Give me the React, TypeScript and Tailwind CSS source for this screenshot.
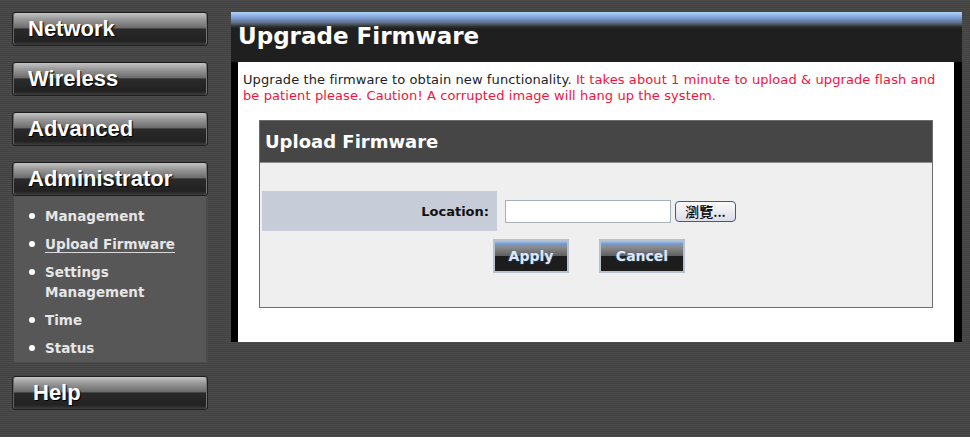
import React from "react";

const navGrad =
  "bg-[linear-gradient(to_bottom,#c4c4c4_0%,#9c9c9c_18%,#6c6c6c_46%,#2a2a2a_50%,#222222_88%,#3e3e3e_100%)]";

function NavBtn({ label, pl }: { label: string; pl: string }) {
  return (
    <div
      className={`h-[34px] w-[196px] rounded-[3px] border border-[#1e1e1e] ${navGrad} shadow-[inset_-1px_0_0_#777,inset_1px_0_0_#666] flex items-center ${pl}`}
    >
      <span className="font-['Liberation_Sans',Arial,sans-serif] font-bold text-[22px] leading-none text-white [text-shadow:1px_1px_1px_#000]">
        {label}
      </span>
    </div>
  );
}

function SubItem({ children, active }: { children: React.ReactNode; active?: boolean }) {
  return (
    <li className="flex items-start">
      <span className="mt-[7px] mr-[10px] ml-[15px] h-[6px] w-[6px] shrink-0 rounded-full bg-white" />
      <span
        className={`font-['DejaVu_Sans',sans-serif] font-bold text-[13.5px] leading-[20px] text-[#e6e6e6] ${
          active ? "underline underline-offset-[3px] decoration-[#d8d8d8]" : ""
        }`}
      >
        {children}
      </span>
    </li>
  );
}

function GlossBtn({ label, w }: { label: string; w: string }) {
  return (
    <div
      className={`${w} h-[34px] border-2 border-[#b8c2ce] bg-[linear-gradient(to_bottom,#9cc8f6_0px,#7498cc_3px,#8c8c8c_6px,#5e5e5e_15px,#1c1c1c_15px,#1c1c1c_100%)] flex items-center justify-center`}
    >
      <span className="font-['DejaVu_Sans',sans-serif] font-bold text-[14px] leading-none text-[#dfe6f2] [text-shadow:0_0_2px_#4a6fb0]">
        {label}
      </span>
    </div>
  );
}

export default function App() {
  return (
    <div className="h-[437px] w-full overflow-hidden bg-[repeating-linear-gradient(to_bottom,#4b4b4b_0px,#4b4b4b_1px,#424242_1px,#424242_2px)] flex">
      {/* Sidebar */}
      <div className="w-[231px] shrink-0 pl-[12px] pt-[12px]">
        <div className="flex flex-col gap-[16px]">
          <NavBtn label="Network" pl="pl-[15px]" />
          <NavBtn label="Wireless" pl="pl-[15px]" />
          <NavBtn label="Advanced" pl="pl-[15px]" />
          <div>
            <NavBtn label="Administrator" pl="pl-[15px]" />
            <ul className="ml-[2px] w-[194px] bg-[#575757] border-r-2 border-[#4c4c4c] pt-[10px] pb-[4px] flex flex-col gap-[8px]">
              <SubItem>Management</SubItem>
              <SubItem active>Upload Firmware</SubItem>
              <SubItem>
                Settings
                <br />
                Management
              </SubItem>
              <SubItem>Time</SubItem>
              <SubItem>Status</SubItem>
            </ul>
          </div>
        </div>
        <div className="mt-[14px]">
          <NavBtn label="Help" pl="pl-[20px]" />
        </div>
      </div>

      {/* Main panel */}
      <div className="mt-[12px] w-[731px] shrink-0 self-start">
        <div className="h-[50px] bg-[linear-gradient(to_bottom,#b0d4f6_0px,#7c9ed6_6px,#5c6a80_11px,#2a2a2a_15px,#1f1f1f_17px,#1f1f1f_100%)] pl-[7px] pt-[13px]">
          <div className="font-['DejaVu_Sans',sans-serif] font-bold text-[23px] leading-none text-white">
            Upgrade Firmware
          </div>
        </div>
        <div className="bg-black pl-[7px] pr-[8px]">
          <div className="bg-white h-[280px] pt-[10px]">
            <p className="px-[5px] font-['DejaVu_Sans',sans-serif] text-[13px] leading-[16px] tracking-[0.1px] text-[#222222]">
              Upgrade the firmware to obtain new functionality.{" "}
              <span className="text-[#f0143c]">
                It takes about 1 minute to upload &amp; upgrade flash and
                <br />
                be patient please. Caution! A corrupted image will hang up the system.
              </span>
            </p>

            <div className="mx-[21px] mt-[16px] border border-[#6c6c6c] bg-[#efefef]">
              <div className="h-[42px] bg-[#464646] border-b border-[#8c8c8c] flex items-center pl-[5px]">
                <span className="font-['DejaVu_Sans',sans-serif] font-bold text-[18px] leading-none text-white">
                  Upload Firmware
                </span>
              </div>
              <div className="pt-[28px] px-[2px] pb-[34px]">
                <div className="flex h-[40px]">
                  <div className="w-[235px] bg-[#c6cdd9] flex items-center justify-end pr-[8px]">
                    <span className="font-['DejaVu_Sans',sans-serif] font-bold text-[13px] leading-none text-[#111]">
                      Location:
                    </span>
                  </div>
                  <div className="flex items-center pl-[8px] gap-[4px]">
                    <div className="h-[23px] w-[166px] border border-[#a9b0b8] bg-white" />
                    <div className="h-[21px] w-[61px] rounded-[4px] border border-[#3d5c8c] bg-[linear-gradient(to_bottom,#fbfbfb,#dcdde9)] flex items-center justify-center">
                      <span className="font-['Noto_Sans_CJK_TC','Noto_Sans_CJK_SC',sans-serif] font-medium text-[14px] leading-none text-black">
                        瀏覽...
                      </span>
                    </div>
                  </div>
                </div>
                <div className="mt-[8px] flex pl-[231px] gap-[30px]">
                  <GlossBtn label="Apply" w="w-[76px]" />
                  <GlossBtn label="Cancel" w="w-[86px]" />
                </div>
              </div>
            </div>
          </div>
        </div>
      </div>
    </div>
  );
}
